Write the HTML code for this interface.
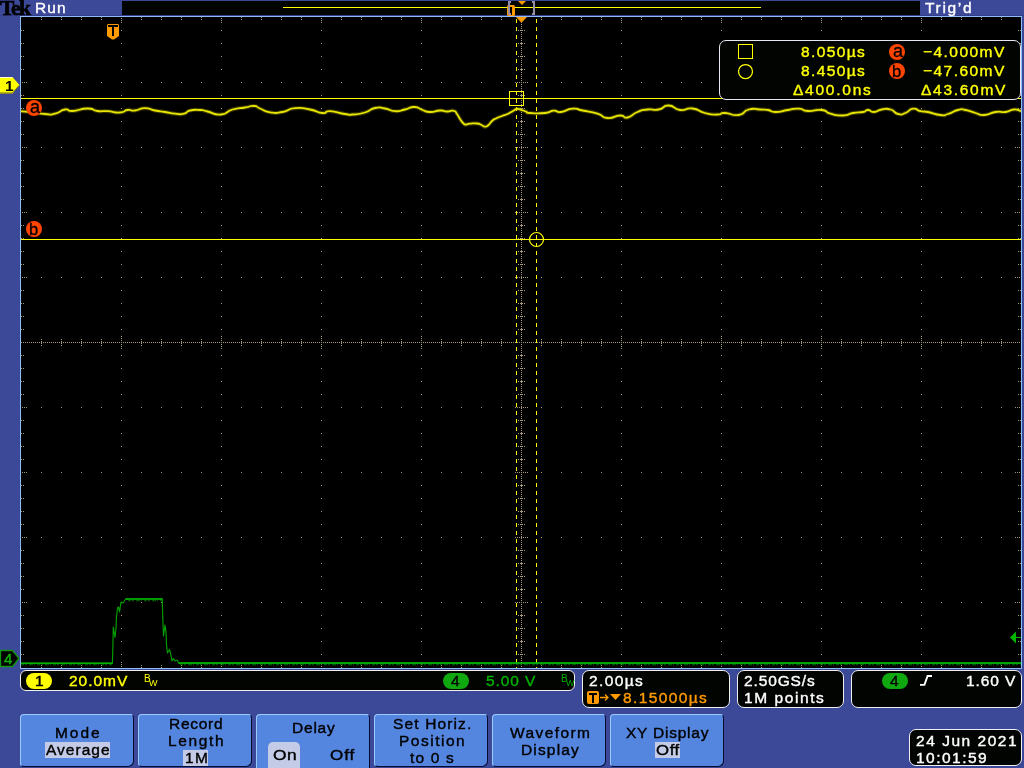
<!DOCTYPE html>
<html><head><meta charset="utf-8"><title>Tek</title>
<style>
html,body{margin:0;padding:0;}
html{width:1024px;height:768px;overflow:hidden;}
body{width:1024px;height:768px;overflow:hidden;background:#3c4898;position:relative;font-family:"Liberation Sans",sans-serif;}
.abs{position:absolute;}
.t{position:absolute;white-space:pre;}
.panel{position:absolute;box-sizing:border-box;background:#020402;border:1px solid #f0f0f0;border-radius:7px;}
.btn{position:absolute;box-sizing:border-box;background:#5486e0;border-radius:4px 4px 6px 4px;border-top:1px solid #9ccbff;border-left:1px solid #9ccbff;border-right:1px solid #040a30;border-bottom:1px solid #040a30;}
.hl{position:absolute;background:#c4cbe6;}
.pill{position:absolute;border-radius:8px;}
</style></head><body>
<!-- top bar -->
<div class="abs" style="left:122px;top:1px;width:798px;height:14px;background:#020402;"></div>
<div class="abs" style="left:283px;top:7px;width:478px;height:1px;background:#ffff00;"></div>
<!-- graticule frame -->
<div class="abs" style="left:0px;top:15px;width:1024px;height:1px;background:#323d8c;"></div>
<div class="abs" style="left:20px;top:16px;width:1002px;height:653px;background:#8fbcf5;"></div>
<div class="abs" style="left:21px;top:17px;width:1000px;height:651px;background:#000;"></div>
<svg class="abs" style="left:0;top:0" width="1024" height="768" viewBox="0 0 1024 768">
<g shape-rendering="crispEdges" stroke-width="1" fill="none">
<line x1="121.5" y1="336" x2="121.5" y2="349" stroke="#a89a78" stroke-dasharray="1 1" stroke-dashoffset="0"/>
<line x1="121.5" y1="30" x2="121.5" y2="666" stroke="#a89a78" stroke-dasharray="1 12" stroke-dashoffset="0"/>
<line x1="121.5" y1="18" x2="121.5" y2="23" stroke="#a89a78" stroke-dasharray="1 1" stroke-dashoffset="0"/>
<line x1="121.5" y1="662" x2="121.5" y2="667" stroke="#a89a78" stroke-dasharray="1 1" stroke-dashoffset="0"/>
<line x1="221.5" y1="336" x2="221.5" y2="349" stroke="#a89a78" stroke-dasharray="1 1" stroke-dashoffset="0"/>
<line x1="221.5" y1="30" x2="221.5" y2="666" stroke="#a89a78" stroke-dasharray="1 12" stroke-dashoffset="0"/>
<line x1="221.5" y1="18" x2="221.5" y2="23" stroke="#a89a78" stroke-dasharray="1 1" stroke-dashoffset="0"/>
<line x1="221.5" y1="662" x2="221.5" y2="667" stroke="#a89a78" stroke-dasharray="1 1" stroke-dashoffset="0"/>
<line x1="321.5" y1="336" x2="321.5" y2="349" stroke="#a89a78" stroke-dasharray="1 1" stroke-dashoffset="0"/>
<line x1="321.5" y1="30" x2="321.5" y2="666" stroke="#a89a78" stroke-dasharray="1 12" stroke-dashoffset="0"/>
<line x1="321.5" y1="18" x2="321.5" y2="23" stroke="#a89a78" stroke-dasharray="1 1" stroke-dashoffset="0"/>
<line x1="321.5" y1="662" x2="321.5" y2="667" stroke="#a89a78" stroke-dasharray="1 1" stroke-dashoffset="0"/>
<line x1="421.5" y1="336" x2="421.5" y2="349" stroke="#a89a78" stroke-dasharray="1 1" stroke-dashoffset="0"/>
<line x1="421.5" y1="30" x2="421.5" y2="666" stroke="#a89a78" stroke-dasharray="1 12" stroke-dashoffset="0"/>
<line x1="421.5" y1="18" x2="421.5" y2="23" stroke="#a89a78" stroke-dasharray="1 1" stroke-dashoffset="0"/>
<line x1="421.5" y1="662" x2="421.5" y2="667" stroke="#a89a78" stroke-dasharray="1 1" stroke-dashoffset="0"/>
<line x1="521.5" y1="18" x2="521.5" y2="668" stroke="#a89a78" stroke-dasharray="1 1" stroke-dashoffset="0"/>
<line x1="621.5" y1="336" x2="621.5" y2="349" stroke="#a89a78" stroke-dasharray="1 1" stroke-dashoffset="0"/>
<line x1="621.5" y1="30" x2="621.5" y2="666" stroke="#a89a78" stroke-dasharray="1 12" stroke-dashoffset="0"/>
<line x1="621.5" y1="18" x2="621.5" y2="23" stroke="#a89a78" stroke-dasharray="1 1" stroke-dashoffset="0"/>
<line x1="621.5" y1="662" x2="621.5" y2="667" stroke="#a89a78" stroke-dasharray="1 1" stroke-dashoffset="0"/>
<line x1="721.5" y1="336" x2="721.5" y2="349" stroke="#a89a78" stroke-dasharray="1 1" stroke-dashoffset="0"/>
<line x1="721.5" y1="30" x2="721.5" y2="666" stroke="#a89a78" stroke-dasharray="1 12" stroke-dashoffset="0"/>
<line x1="721.5" y1="18" x2="721.5" y2="23" stroke="#a89a78" stroke-dasharray="1 1" stroke-dashoffset="0"/>
<line x1="721.5" y1="662" x2="721.5" y2="667" stroke="#a89a78" stroke-dasharray="1 1" stroke-dashoffset="0"/>
<line x1="821.5" y1="336" x2="821.5" y2="349" stroke="#a89a78" stroke-dasharray="1 1" stroke-dashoffset="0"/>
<line x1="821.5" y1="30" x2="821.5" y2="666" stroke="#a89a78" stroke-dasharray="1 12" stroke-dashoffset="0"/>
<line x1="821.5" y1="18" x2="821.5" y2="23" stroke="#a89a78" stroke-dasharray="1 1" stroke-dashoffset="0"/>
<line x1="821.5" y1="662" x2="821.5" y2="667" stroke="#a89a78" stroke-dasharray="1 1" stroke-dashoffset="0"/>
<line x1="921.5" y1="336" x2="921.5" y2="349" stroke="#a89a78" stroke-dasharray="1 1" stroke-dashoffset="0"/>
<line x1="921.5" y1="30" x2="921.5" y2="666" stroke="#a89a78" stroke-dasharray="1 12" stroke-dashoffset="0"/>
<line x1="921.5" y1="18" x2="921.5" y2="23" stroke="#a89a78" stroke-dasharray="1 1" stroke-dashoffset="0"/>
<line x1="921.5" y1="662" x2="921.5" y2="667" stroke="#a89a78" stroke-dasharray="1 1" stroke-dashoffset="0"/>
<line x1="515" y1="82.5" x2="528" y2="82.5" stroke="#a89a78" stroke-dasharray="1 1" stroke-dashoffset="0"/>
<line x1="41" y1="82.5" x2="1019" y2="82.5" stroke="#a89a78" stroke-dasharray="1 19" stroke-dashoffset="0"/>
<line x1="22" y1="82.5" x2="27" y2="82.5" stroke="#a89a78" stroke-dasharray="1 1" stroke-dashoffset="0"/>
<line x1="1015" y1="82.5" x2="1020" y2="82.5" stroke="#a89a78" stroke-dasharray="1 1" stroke-dashoffset="0"/>
<line x1="515" y1="147.5" x2="528" y2="147.5" stroke="#a89a78" stroke-dasharray="1 1" stroke-dashoffset="0"/>
<line x1="41" y1="147.5" x2="1019" y2="147.5" stroke="#a89a78" stroke-dasharray="1 19" stroke-dashoffset="0"/>
<line x1="22" y1="147.5" x2="27" y2="147.5" stroke="#a89a78" stroke-dasharray="1 1" stroke-dashoffset="0"/>
<line x1="1015" y1="147.5" x2="1020" y2="147.5" stroke="#a89a78" stroke-dasharray="1 1" stroke-dashoffset="0"/>
<line x1="515" y1="212.5" x2="528" y2="212.5" stroke="#a89a78" stroke-dasharray="1 1" stroke-dashoffset="0"/>
<line x1="41" y1="212.5" x2="1019" y2="212.5" stroke="#a89a78" stroke-dasharray="1 19" stroke-dashoffset="0"/>
<line x1="22" y1="212.5" x2="27" y2="212.5" stroke="#a89a78" stroke-dasharray="1 1" stroke-dashoffset="0"/>
<line x1="1015" y1="212.5" x2="1020" y2="212.5" stroke="#a89a78" stroke-dasharray="1 1" stroke-dashoffset="0"/>
<line x1="515" y1="277.5" x2="528" y2="277.5" stroke="#a89a78" stroke-dasharray="1 1" stroke-dashoffset="0"/>
<line x1="41" y1="277.5" x2="1019" y2="277.5" stroke="#a89a78" stroke-dasharray="1 19" stroke-dashoffset="0"/>
<line x1="22" y1="277.5" x2="27" y2="277.5" stroke="#a89a78" stroke-dasharray="1 1" stroke-dashoffset="0"/>
<line x1="1015" y1="277.5" x2="1020" y2="277.5" stroke="#a89a78" stroke-dasharray="1 1" stroke-dashoffset="0"/>
<line x1="21" y1="342.5" x2="1021" y2="342.5" stroke="#a89a78" stroke-dasharray="1 1" stroke-dashoffset="0"/>
<line x1="515" y1="407.5" x2="528" y2="407.5" stroke="#a89a78" stroke-dasharray="1 1" stroke-dashoffset="0"/>
<line x1="41" y1="407.5" x2="1019" y2="407.5" stroke="#a89a78" stroke-dasharray="1 19" stroke-dashoffset="0"/>
<line x1="22" y1="407.5" x2="27" y2="407.5" stroke="#a89a78" stroke-dasharray="1 1" stroke-dashoffset="0"/>
<line x1="1015" y1="407.5" x2="1020" y2="407.5" stroke="#a89a78" stroke-dasharray="1 1" stroke-dashoffset="0"/>
<line x1="515" y1="472.5" x2="528" y2="472.5" stroke="#a89a78" stroke-dasharray="1 1" stroke-dashoffset="0"/>
<line x1="41" y1="472.5" x2="1019" y2="472.5" stroke="#a89a78" stroke-dasharray="1 19" stroke-dashoffset="0"/>
<line x1="22" y1="472.5" x2="27" y2="472.5" stroke="#a89a78" stroke-dasharray="1 1" stroke-dashoffset="0"/>
<line x1="1015" y1="472.5" x2="1020" y2="472.5" stroke="#a89a78" stroke-dasharray="1 1" stroke-dashoffset="0"/>
<line x1="515" y1="537.5" x2="528" y2="537.5" stroke="#a89a78" stroke-dasharray="1 1" stroke-dashoffset="0"/>
<line x1="41" y1="537.5" x2="1019" y2="537.5" stroke="#a89a78" stroke-dasharray="1 19" stroke-dashoffset="0"/>
<line x1="22" y1="537.5" x2="27" y2="537.5" stroke="#a89a78" stroke-dasharray="1 1" stroke-dashoffset="0"/>
<line x1="1015" y1="537.5" x2="1020" y2="537.5" stroke="#a89a78" stroke-dasharray="1 1" stroke-dashoffset="0"/>
<line x1="515" y1="602.5" x2="528" y2="602.5" stroke="#a89a78" stroke-dasharray="1 1" stroke-dashoffset="0"/>
<line x1="41" y1="602.5" x2="1019" y2="602.5" stroke="#a89a78" stroke-dasharray="1 19" stroke-dashoffset="0"/>
<line x1="22" y1="602.5" x2="27" y2="602.5" stroke="#a89a78" stroke-dasharray="1 1" stroke-dashoffset="0"/>
<line x1="1015" y1="602.5" x2="1020" y2="602.5" stroke="#a89a78" stroke-dasharray="1 1" stroke-dashoffset="0"/>
<line x1="41.5" y1="17" x2="41.5" y2="20" stroke="#a89a78" stroke-dasharray="1 1" stroke-dashoffset="0"/>
<line x1="41.5" y1="665" x2="41.5" y2="668" stroke="#a89a78" stroke-dasharray="1 1" stroke-dashoffset="0"/>
<rect x="41" y="341" width="1" height="3" fill="#a89a78"/>
<rect x="41" y="339" width="1" height="1" fill="#a89a78"/>
<rect x="41" y="345" width="1" height="1" fill="#a89a78"/>
<line x1="61.5" y1="17" x2="61.5" y2="20" stroke="#a89a78" stroke-dasharray="1 1" stroke-dashoffset="0"/>
<line x1="61.5" y1="665" x2="61.5" y2="668" stroke="#a89a78" stroke-dasharray="1 1" stroke-dashoffset="0"/>
<rect x="61" y="341" width="1" height="3" fill="#a89a78"/>
<rect x="61" y="339" width="1" height="1" fill="#a89a78"/>
<rect x="61" y="345" width="1" height="1" fill="#a89a78"/>
<line x1="81.5" y1="17" x2="81.5" y2="20" stroke="#a89a78" stroke-dasharray="1 1" stroke-dashoffset="0"/>
<line x1="81.5" y1="665" x2="81.5" y2="668" stroke="#a89a78" stroke-dasharray="1 1" stroke-dashoffset="0"/>
<rect x="81" y="341" width="1" height="3" fill="#a89a78"/>
<rect x="81" y="339" width="1" height="1" fill="#a89a78"/>
<rect x="81" y="345" width="1" height="1" fill="#a89a78"/>
<line x1="101.5" y1="17" x2="101.5" y2="20" stroke="#a89a78" stroke-dasharray="1 1" stroke-dashoffset="0"/>
<line x1="101.5" y1="665" x2="101.5" y2="668" stroke="#a89a78" stroke-dasharray="1 1" stroke-dashoffset="0"/>
<rect x="101" y="341" width="1" height="3" fill="#a89a78"/>
<rect x="101" y="339" width="1" height="1" fill="#a89a78"/>
<rect x="101" y="345" width="1" height="1" fill="#a89a78"/>
<line x1="141.5" y1="17" x2="141.5" y2="20" stroke="#a89a78" stroke-dasharray="1 1" stroke-dashoffset="0"/>
<line x1="141.5" y1="665" x2="141.5" y2="668" stroke="#a89a78" stroke-dasharray="1 1" stroke-dashoffset="0"/>
<rect x="141" y="341" width="1" height="3" fill="#a89a78"/>
<rect x="141" y="339" width="1" height="1" fill="#a89a78"/>
<rect x="141" y="345" width="1" height="1" fill="#a89a78"/>
<line x1="161.5" y1="17" x2="161.5" y2="20" stroke="#a89a78" stroke-dasharray="1 1" stroke-dashoffset="0"/>
<line x1="161.5" y1="665" x2="161.5" y2="668" stroke="#a89a78" stroke-dasharray="1 1" stroke-dashoffset="0"/>
<rect x="161" y="341" width="1" height="3" fill="#a89a78"/>
<rect x="161" y="339" width="1" height="1" fill="#a89a78"/>
<rect x="161" y="345" width="1" height="1" fill="#a89a78"/>
<line x1="181.5" y1="17" x2="181.5" y2="20" stroke="#a89a78" stroke-dasharray="1 1" stroke-dashoffset="0"/>
<line x1="181.5" y1="665" x2="181.5" y2="668" stroke="#a89a78" stroke-dasharray="1 1" stroke-dashoffset="0"/>
<rect x="181" y="341" width="1" height="3" fill="#a89a78"/>
<rect x="181" y="339" width="1" height="1" fill="#a89a78"/>
<rect x="181" y="345" width="1" height="1" fill="#a89a78"/>
<line x1="201.5" y1="17" x2="201.5" y2="20" stroke="#a89a78" stroke-dasharray="1 1" stroke-dashoffset="0"/>
<line x1="201.5" y1="665" x2="201.5" y2="668" stroke="#a89a78" stroke-dasharray="1 1" stroke-dashoffset="0"/>
<rect x="201" y="341" width="1" height="3" fill="#a89a78"/>
<rect x="201" y="339" width="1" height="1" fill="#a89a78"/>
<rect x="201" y="345" width="1" height="1" fill="#a89a78"/>
<line x1="241.5" y1="17" x2="241.5" y2="20" stroke="#a89a78" stroke-dasharray="1 1" stroke-dashoffset="0"/>
<line x1="241.5" y1="665" x2="241.5" y2="668" stroke="#a89a78" stroke-dasharray="1 1" stroke-dashoffset="0"/>
<rect x="241" y="341" width="1" height="3" fill="#a89a78"/>
<rect x="241" y="339" width="1" height="1" fill="#a89a78"/>
<rect x="241" y="345" width="1" height="1" fill="#a89a78"/>
<line x1="261.5" y1="17" x2="261.5" y2="20" stroke="#a89a78" stroke-dasharray="1 1" stroke-dashoffset="0"/>
<line x1="261.5" y1="665" x2="261.5" y2="668" stroke="#a89a78" stroke-dasharray="1 1" stroke-dashoffset="0"/>
<rect x="261" y="341" width="1" height="3" fill="#a89a78"/>
<rect x="261" y="339" width="1" height="1" fill="#a89a78"/>
<rect x="261" y="345" width="1" height="1" fill="#a89a78"/>
<line x1="281.5" y1="17" x2="281.5" y2="20" stroke="#a89a78" stroke-dasharray="1 1" stroke-dashoffset="0"/>
<line x1="281.5" y1="665" x2="281.5" y2="668" stroke="#a89a78" stroke-dasharray="1 1" stroke-dashoffset="0"/>
<rect x="281" y="341" width="1" height="3" fill="#a89a78"/>
<rect x="281" y="339" width="1" height="1" fill="#a89a78"/>
<rect x="281" y="345" width="1" height="1" fill="#a89a78"/>
<line x1="301.5" y1="17" x2="301.5" y2="20" stroke="#a89a78" stroke-dasharray="1 1" stroke-dashoffset="0"/>
<line x1="301.5" y1="665" x2="301.5" y2="668" stroke="#a89a78" stroke-dasharray="1 1" stroke-dashoffset="0"/>
<rect x="301" y="341" width="1" height="3" fill="#a89a78"/>
<rect x="301" y="339" width="1" height="1" fill="#a89a78"/>
<rect x="301" y="345" width="1" height="1" fill="#a89a78"/>
<line x1="341.5" y1="17" x2="341.5" y2="20" stroke="#a89a78" stroke-dasharray="1 1" stroke-dashoffset="0"/>
<line x1="341.5" y1="665" x2="341.5" y2="668" stroke="#a89a78" stroke-dasharray="1 1" stroke-dashoffset="0"/>
<rect x="341" y="341" width="1" height="3" fill="#a89a78"/>
<rect x="341" y="339" width="1" height="1" fill="#a89a78"/>
<rect x="341" y="345" width="1" height="1" fill="#a89a78"/>
<line x1="361.5" y1="17" x2="361.5" y2="20" stroke="#a89a78" stroke-dasharray="1 1" stroke-dashoffset="0"/>
<line x1="361.5" y1="665" x2="361.5" y2="668" stroke="#a89a78" stroke-dasharray="1 1" stroke-dashoffset="0"/>
<rect x="361" y="341" width="1" height="3" fill="#a89a78"/>
<rect x="361" y="339" width="1" height="1" fill="#a89a78"/>
<rect x="361" y="345" width="1" height="1" fill="#a89a78"/>
<line x1="381.5" y1="17" x2="381.5" y2="20" stroke="#a89a78" stroke-dasharray="1 1" stroke-dashoffset="0"/>
<line x1="381.5" y1="665" x2="381.5" y2="668" stroke="#a89a78" stroke-dasharray="1 1" stroke-dashoffset="0"/>
<rect x="381" y="341" width="1" height="3" fill="#a89a78"/>
<rect x="381" y="339" width="1" height="1" fill="#a89a78"/>
<rect x="381" y="345" width="1" height="1" fill="#a89a78"/>
<line x1="401.5" y1="17" x2="401.5" y2="20" stroke="#a89a78" stroke-dasharray="1 1" stroke-dashoffset="0"/>
<line x1="401.5" y1="665" x2="401.5" y2="668" stroke="#a89a78" stroke-dasharray="1 1" stroke-dashoffset="0"/>
<rect x="401" y="341" width="1" height="3" fill="#a89a78"/>
<rect x="401" y="339" width="1" height="1" fill="#a89a78"/>
<rect x="401" y="345" width="1" height="1" fill="#a89a78"/>
<line x1="441.5" y1="17" x2="441.5" y2="20" stroke="#a89a78" stroke-dasharray="1 1" stroke-dashoffset="0"/>
<line x1="441.5" y1="665" x2="441.5" y2="668" stroke="#a89a78" stroke-dasharray="1 1" stroke-dashoffset="0"/>
<rect x="441" y="341" width="1" height="3" fill="#a89a78"/>
<rect x="441" y="339" width="1" height="1" fill="#a89a78"/>
<rect x="441" y="345" width="1" height="1" fill="#a89a78"/>
<line x1="461.5" y1="17" x2="461.5" y2="20" stroke="#a89a78" stroke-dasharray="1 1" stroke-dashoffset="0"/>
<line x1="461.5" y1="665" x2="461.5" y2="668" stroke="#a89a78" stroke-dasharray="1 1" stroke-dashoffset="0"/>
<rect x="461" y="341" width="1" height="3" fill="#a89a78"/>
<rect x="461" y="339" width="1" height="1" fill="#a89a78"/>
<rect x="461" y="345" width="1" height="1" fill="#a89a78"/>
<line x1="481.5" y1="17" x2="481.5" y2="20" stroke="#a89a78" stroke-dasharray="1 1" stroke-dashoffset="0"/>
<line x1="481.5" y1="665" x2="481.5" y2="668" stroke="#a89a78" stroke-dasharray="1 1" stroke-dashoffset="0"/>
<rect x="481" y="341" width="1" height="3" fill="#a89a78"/>
<rect x="481" y="339" width="1" height="1" fill="#a89a78"/>
<rect x="481" y="345" width="1" height="1" fill="#a89a78"/>
<line x1="501.5" y1="17" x2="501.5" y2="20" stroke="#a89a78" stroke-dasharray="1 1" stroke-dashoffset="0"/>
<line x1="501.5" y1="665" x2="501.5" y2="668" stroke="#a89a78" stroke-dasharray="1 1" stroke-dashoffset="0"/>
<rect x="501" y="341" width="1" height="3" fill="#a89a78"/>
<rect x="501" y="339" width="1" height="1" fill="#a89a78"/>
<rect x="501" y="345" width="1" height="1" fill="#a89a78"/>
<line x1="541.5" y1="17" x2="541.5" y2="20" stroke="#a89a78" stroke-dasharray="1 1" stroke-dashoffset="0"/>
<line x1="541.5" y1="665" x2="541.5" y2="668" stroke="#a89a78" stroke-dasharray="1 1" stroke-dashoffset="0"/>
<rect x="541" y="341" width="1" height="3" fill="#a89a78"/>
<rect x="541" y="339" width="1" height="1" fill="#a89a78"/>
<rect x="541" y="345" width="1" height="1" fill="#a89a78"/>
<line x1="561.5" y1="17" x2="561.5" y2="20" stroke="#a89a78" stroke-dasharray="1 1" stroke-dashoffset="0"/>
<line x1="561.5" y1="665" x2="561.5" y2="668" stroke="#a89a78" stroke-dasharray="1 1" stroke-dashoffset="0"/>
<rect x="561" y="341" width="1" height="3" fill="#a89a78"/>
<rect x="561" y="339" width="1" height="1" fill="#a89a78"/>
<rect x="561" y="345" width="1" height="1" fill="#a89a78"/>
<line x1="581.5" y1="17" x2="581.5" y2="20" stroke="#a89a78" stroke-dasharray="1 1" stroke-dashoffset="0"/>
<line x1="581.5" y1="665" x2="581.5" y2="668" stroke="#a89a78" stroke-dasharray="1 1" stroke-dashoffset="0"/>
<rect x="581" y="341" width="1" height="3" fill="#a89a78"/>
<rect x="581" y="339" width="1" height="1" fill="#a89a78"/>
<rect x="581" y="345" width="1" height="1" fill="#a89a78"/>
<line x1="601.5" y1="17" x2="601.5" y2="20" stroke="#a89a78" stroke-dasharray="1 1" stroke-dashoffset="0"/>
<line x1="601.5" y1="665" x2="601.5" y2="668" stroke="#a89a78" stroke-dasharray="1 1" stroke-dashoffset="0"/>
<rect x="601" y="341" width="1" height="3" fill="#a89a78"/>
<rect x="601" y="339" width="1" height="1" fill="#a89a78"/>
<rect x="601" y="345" width="1" height="1" fill="#a89a78"/>
<line x1="641.5" y1="17" x2="641.5" y2="20" stroke="#a89a78" stroke-dasharray="1 1" stroke-dashoffset="0"/>
<line x1="641.5" y1="665" x2="641.5" y2="668" stroke="#a89a78" stroke-dasharray="1 1" stroke-dashoffset="0"/>
<rect x="641" y="341" width="1" height="3" fill="#a89a78"/>
<rect x="641" y="339" width="1" height="1" fill="#a89a78"/>
<rect x="641" y="345" width="1" height="1" fill="#a89a78"/>
<line x1="661.5" y1="17" x2="661.5" y2="20" stroke="#a89a78" stroke-dasharray="1 1" stroke-dashoffset="0"/>
<line x1="661.5" y1="665" x2="661.5" y2="668" stroke="#a89a78" stroke-dasharray="1 1" stroke-dashoffset="0"/>
<rect x="661" y="341" width="1" height="3" fill="#a89a78"/>
<rect x="661" y="339" width="1" height="1" fill="#a89a78"/>
<rect x="661" y="345" width="1" height="1" fill="#a89a78"/>
<line x1="681.5" y1="17" x2="681.5" y2="20" stroke="#a89a78" stroke-dasharray="1 1" stroke-dashoffset="0"/>
<line x1="681.5" y1="665" x2="681.5" y2="668" stroke="#a89a78" stroke-dasharray="1 1" stroke-dashoffset="0"/>
<rect x="681" y="341" width="1" height="3" fill="#a89a78"/>
<rect x="681" y="339" width="1" height="1" fill="#a89a78"/>
<rect x="681" y="345" width="1" height="1" fill="#a89a78"/>
<line x1="701.5" y1="17" x2="701.5" y2="20" stroke="#a89a78" stroke-dasharray="1 1" stroke-dashoffset="0"/>
<line x1="701.5" y1="665" x2="701.5" y2="668" stroke="#a89a78" stroke-dasharray="1 1" stroke-dashoffset="0"/>
<rect x="701" y="341" width="1" height="3" fill="#a89a78"/>
<rect x="701" y="339" width="1" height="1" fill="#a89a78"/>
<rect x="701" y="345" width="1" height="1" fill="#a89a78"/>
<line x1="741.5" y1="17" x2="741.5" y2="20" stroke="#a89a78" stroke-dasharray="1 1" stroke-dashoffset="0"/>
<line x1="741.5" y1="665" x2="741.5" y2="668" stroke="#a89a78" stroke-dasharray="1 1" stroke-dashoffset="0"/>
<rect x="741" y="341" width="1" height="3" fill="#a89a78"/>
<rect x="741" y="339" width="1" height="1" fill="#a89a78"/>
<rect x="741" y="345" width="1" height="1" fill="#a89a78"/>
<line x1="761.5" y1="17" x2="761.5" y2="20" stroke="#a89a78" stroke-dasharray="1 1" stroke-dashoffset="0"/>
<line x1="761.5" y1="665" x2="761.5" y2="668" stroke="#a89a78" stroke-dasharray="1 1" stroke-dashoffset="0"/>
<rect x="761" y="341" width="1" height="3" fill="#a89a78"/>
<rect x="761" y="339" width="1" height="1" fill="#a89a78"/>
<rect x="761" y="345" width="1" height="1" fill="#a89a78"/>
<line x1="781.5" y1="17" x2="781.5" y2="20" stroke="#a89a78" stroke-dasharray="1 1" stroke-dashoffset="0"/>
<line x1="781.5" y1="665" x2="781.5" y2="668" stroke="#a89a78" stroke-dasharray="1 1" stroke-dashoffset="0"/>
<rect x="781" y="341" width="1" height="3" fill="#a89a78"/>
<rect x="781" y="339" width="1" height="1" fill="#a89a78"/>
<rect x="781" y="345" width="1" height="1" fill="#a89a78"/>
<line x1="801.5" y1="17" x2="801.5" y2="20" stroke="#a89a78" stroke-dasharray="1 1" stroke-dashoffset="0"/>
<line x1="801.5" y1="665" x2="801.5" y2="668" stroke="#a89a78" stroke-dasharray="1 1" stroke-dashoffset="0"/>
<rect x="801" y="341" width="1" height="3" fill="#a89a78"/>
<rect x="801" y="339" width="1" height="1" fill="#a89a78"/>
<rect x="801" y="345" width="1" height="1" fill="#a89a78"/>
<line x1="841.5" y1="17" x2="841.5" y2="20" stroke="#a89a78" stroke-dasharray="1 1" stroke-dashoffset="0"/>
<line x1="841.5" y1="665" x2="841.5" y2="668" stroke="#a89a78" stroke-dasharray="1 1" stroke-dashoffset="0"/>
<rect x="841" y="341" width="1" height="3" fill="#a89a78"/>
<rect x="841" y="339" width="1" height="1" fill="#a89a78"/>
<rect x="841" y="345" width="1" height="1" fill="#a89a78"/>
<line x1="861.5" y1="17" x2="861.5" y2="20" stroke="#a89a78" stroke-dasharray="1 1" stroke-dashoffset="0"/>
<line x1="861.5" y1="665" x2="861.5" y2="668" stroke="#a89a78" stroke-dasharray="1 1" stroke-dashoffset="0"/>
<rect x="861" y="341" width="1" height="3" fill="#a89a78"/>
<rect x="861" y="339" width="1" height="1" fill="#a89a78"/>
<rect x="861" y="345" width="1" height="1" fill="#a89a78"/>
<line x1="881.5" y1="17" x2="881.5" y2="20" stroke="#a89a78" stroke-dasharray="1 1" stroke-dashoffset="0"/>
<line x1="881.5" y1="665" x2="881.5" y2="668" stroke="#a89a78" stroke-dasharray="1 1" stroke-dashoffset="0"/>
<rect x="881" y="341" width="1" height="3" fill="#a89a78"/>
<rect x="881" y="339" width="1" height="1" fill="#a89a78"/>
<rect x="881" y="345" width="1" height="1" fill="#a89a78"/>
<line x1="901.5" y1="17" x2="901.5" y2="20" stroke="#a89a78" stroke-dasharray="1 1" stroke-dashoffset="0"/>
<line x1="901.5" y1="665" x2="901.5" y2="668" stroke="#a89a78" stroke-dasharray="1 1" stroke-dashoffset="0"/>
<rect x="901" y="341" width="1" height="3" fill="#a89a78"/>
<rect x="901" y="339" width="1" height="1" fill="#a89a78"/>
<rect x="901" y="345" width="1" height="1" fill="#a89a78"/>
<line x1="941.5" y1="17" x2="941.5" y2="20" stroke="#a89a78" stroke-dasharray="1 1" stroke-dashoffset="0"/>
<line x1="941.5" y1="665" x2="941.5" y2="668" stroke="#a89a78" stroke-dasharray="1 1" stroke-dashoffset="0"/>
<rect x="941" y="341" width="1" height="3" fill="#a89a78"/>
<rect x="941" y="339" width="1" height="1" fill="#a89a78"/>
<rect x="941" y="345" width="1" height="1" fill="#a89a78"/>
<line x1="961.5" y1="17" x2="961.5" y2="20" stroke="#a89a78" stroke-dasharray="1 1" stroke-dashoffset="0"/>
<line x1="961.5" y1="665" x2="961.5" y2="668" stroke="#a89a78" stroke-dasharray="1 1" stroke-dashoffset="0"/>
<rect x="961" y="341" width="1" height="3" fill="#a89a78"/>
<rect x="961" y="339" width="1" height="1" fill="#a89a78"/>
<rect x="961" y="345" width="1" height="1" fill="#a89a78"/>
<line x1="981.5" y1="17" x2="981.5" y2="20" stroke="#a89a78" stroke-dasharray="1 1" stroke-dashoffset="0"/>
<line x1="981.5" y1="665" x2="981.5" y2="668" stroke="#a89a78" stroke-dasharray="1 1" stroke-dashoffset="0"/>
<rect x="981" y="341" width="1" height="3" fill="#a89a78"/>
<rect x="981" y="339" width="1" height="1" fill="#a89a78"/>
<rect x="981" y="345" width="1" height="1" fill="#a89a78"/>
<line x1="1001.5" y1="17" x2="1001.5" y2="20" stroke="#a89a78" stroke-dasharray="1 1" stroke-dashoffset="0"/>
<line x1="1001.5" y1="665" x2="1001.5" y2="668" stroke="#a89a78" stroke-dasharray="1 1" stroke-dashoffset="0"/>
<rect x="1001" y="341" width="1" height="3" fill="#a89a78"/>
<rect x="1001" y="339" width="1" height="1" fill="#a89a78"/>
<rect x="1001" y="345" width="1" height="1" fill="#a89a78"/>
<line x1="21" y1="30.5" x2="24" y2="30.5" stroke="#a89a78" stroke-dasharray="1 1" stroke-dashoffset="0"/>
<line x1="1018" y1="30.5" x2="1021" y2="30.5" stroke="#a89a78" stroke-dasharray="1 1" stroke-dashoffset="0"/>
<rect x="520" y="30" width="3" height="1" fill="#a89a78"/>
<rect x="518" y="30" width="1" height="1" fill="#a89a78"/>
<rect x="524" y="30" width="1" height="1" fill="#a89a78"/>
<line x1="21" y1="43.5" x2="24" y2="43.5" stroke="#a89a78" stroke-dasharray="1 1" stroke-dashoffset="0"/>
<line x1="1018" y1="43.5" x2="1021" y2="43.5" stroke="#a89a78" stroke-dasharray="1 1" stroke-dashoffset="0"/>
<rect x="520" y="43" width="3" height="1" fill="#a89a78"/>
<rect x="518" y="43" width="1" height="1" fill="#a89a78"/>
<rect x="524" y="43" width="1" height="1" fill="#a89a78"/>
<line x1="21" y1="56.5" x2="24" y2="56.5" stroke="#a89a78" stroke-dasharray="1 1" stroke-dashoffset="0"/>
<line x1="1018" y1="56.5" x2="1021" y2="56.5" stroke="#a89a78" stroke-dasharray="1 1" stroke-dashoffset="0"/>
<rect x="520" y="56" width="3" height="1" fill="#a89a78"/>
<rect x="518" y="56" width="1" height="1" fill="#a89a78"/>
<rect x="524" y="56" width="1" height="1" fill="#a89a78"/>
<line x1="21" y1="69.5" x2="24" y2="69.5" stroke="#a89a78" stroke-dasharray="1 1" stroke-dashoffset="0"/>
<line x1="1018" y1="69.5" x2="1021" y2="69.5" stroke="#a89a78" stroke-dasharray="1 1" stroke-dashoffset="0"/>
<rect x="520" y="69" width="3" height="1" fill="#a89a78"/>
<rect x="518" y="69" width="1" height="1" fill="#a89a78"/>
<rect x="524" y="69" width="1" height="1" fill="#a89a78"/>
<line x1="21" y1="95.5" x2="24" y2="95.5" stroke="#a89a78" stroke-dasharray="1 1" stroke-dashoffset="0"/>
<line x1="1018" y1="95.5" x2="1021" y2="95.5" stroke="#a89a78" stroke-dasharray="1 1" stroke-dashoffset="0"/>
<rect x="520" y="95" width="3" height="1" fill="#a89a78"/>
<rect x="518" y="95" width="1" height="1" fill="#a89a78"/>
<rect x="524" y="95" width="1" height="1" fill="#a89a78"/>
<line x1="21" y1="108.5" x2="24" y2="108.5" stroke="#a89a78" stroke-dasharray="1 1" stroke-dashoffset="0"/>
<line x1="1018" y1="108.5" x2="1021" y2="108.5" stroke="#a89a78" stroke-dasharray="1 1" stroke-dashoffset="0"/>
<rect x="520" y="108" width="3" height="1" fill="#a89a78"/>
<rect x="518" y="108" width="1" height="1" fill="#a89a78"/>
<rect x="524" y="108" width="1" height="1" fill="#a89a78"/>
<line x1="21" y1="121.5" x2="24" y2="121.5" stroke="#a89a78" stroke-dasharray="1 1" stroke-dashoffset="0"/>
<line x1="1018" y1="121.5" x2="1021" y2="121.5" stroke="#a89a78" stroke-dasharray="1 1" stroke-dashoffset="0"/>
<rect x="520" y="121" width="3" height="1" fill="#a89a78"/>
<rect x="518" y="121" width="1" height="1" fill="#a89a78"/>
<rect x="524" y="121" width="1" height="1" fill="#a89a78"/>
<line x1="21" y1="134.5" x2="24" y2="134.5" stroke="#a89a78" stroke-dasharray="1 1" stroke-dashoffset="0"/>
<line x1="1018" y1="134.5" x2="1021" y2="134.5" stroke="#a89a78" stroke-dasharray="1 1" stroke-dashoffset="0"/>
<rect x="520" y="134" width="3" height="1" fill="#a89a78"/>
<rect x="518" y="134" width="1" height="1" fill="#a89a78"/>
<rect x="524" y="134" width="1" height="1" fill="#a89a78"/>
<line x1="21" y1="160.5" x2="24" y2="160.5" stroke="#a89a78" stroke-dasharray="1 1" stroke-dashoffset="0"/>
<line x1="1018" y1="160.5" x2="1021" y2="160.5" stroke="#a89a78" stroke-dasharray="1 1" stroke-dashoffset="0"/>
<rect x="520" y="160" width="3" height="1" fill="#a89a78"/>
<rect x="518" y="160" width="1" height="1" fill="#a89a78"/>
<rect x="524" y="160" width="1" height="1" fill="#a89a78"/>
<line x1="21" y1="173.5" x2="24" y2="173.5" stroke="#a89a78" stroke-dasharray="1 1" stroke-dashoffset="0"/>
<line x1="1018" y1="173.5" x2="1021" y2="173.5" stroke="#a89a78" stroke-dasharray="1 1" stroke-dashoffset="0"/>
<rect x="520" y="173" width="3" height="1" fill="#a89a78"/>
<rect x="518" y="173" width="1" height="1" fill="#a89a78"/>
<rect x="524" y="173" width="1" height="1" fill="#a89a78"/>
<line x1="21" y1="186.5" x2="24" y2="186.5" stroke="#a89a78" stroke-dasharray="1 1" stroke-dashoffset="0"/>
<line x1="1018" y1="186.5" x2="1021" y2="186.5" stroke="#a89a78" stroke-dasharray="1 1" stroke-dashoffset="0"/>
<rect x="520" y="186" width="3" height="1" fill="#a89a78"/>
<rect x="518" y="186" width="1" height="1" fill="#a89a78"/>
<rect x="524" y="186" width="1" height="1" fill="#a89a78"/>
<line x1="21" y1="199.5" x2="24" y2="199.5" stroke="#a89a78" stroke-dasharray="1 1" stroke-dashoffset="0"/>
<line x1="1018" y1="199.5" x2="1021" y2="199.5" stroke="#a89a78" stroke-dasharray="1 1" stroke-dashoffset="0"/>
<rect x="520" y="199" width="3" height="1" fill="#a89a78"/>
<rect x="518" y="199" width="1" height="1" fill="#a89a78"/>
<rect x="524" y="199" width="1" height="1" fill="#a89a78"/>
<line x1="21" y1="225.5" x2="24" y2="225.5" stroke="#a89a78" stroke-dasharray="1 1" stroke-dashoffset="0"/>
<line x1="1018" y1="225.5" x2="1021" y2="225.5" stroke="#a89a78" stroke-dasharray="1 1" stroke-dashoffset="0"/>
<rect x="520" y="225" width="3" height="1" fill="#a89a78"/>
<rect x="518" y="225" width="1" height="1" fill="#a89a78"/>
<rect x="524" y="225" width="1" height="1" fill="#a89a78"/>
<line x1="21" y1="238.5" x2="24" y2="238.5" stroke="#a89a78" stroke-dasharray="1 1" stroke-dashoffset="0"/>
<line x1="1018" y1="238.5" x2="1021" y2="238.5" stroke="#a89a78" stroke-dasharray="1 1" stroke-dashoffset="0"/>
<rect x="520" y="238" width="3" height="1" fill="#a89a78"/>
<rect x="518" y="238" width="1" height="1" fill="#a89a78"/>
<rect x="524" y="238" width="1" height="1" fill="#a89a78"/>
<line x1="21" y1="251.5" x2="24" y2="251.5" stroke="#a89a78" stroke-dasharray="1 1" stroke-dashoffset="0"/>
<line x1="1018" y1="251.5" x2="1021" y2="251.5" stroke="#a89a78" stroke-dasharray="1 1" stroke-dashoffset="0"/>
<rect x="520" y="251" width="3" height="1" fill="#a89a78"/>
<rect x="518" y="251" width="1" height="1" fill="#a89a78"/>
<rect x="524" y="251" width="1" height="1" fill="#a89a78"/>
<line x1="21" y1="264.5" x2="24" y2="264.5" stroke="#a89a78" stroke-dasharray="1 1" stroke-dashoffset="0"/>
<line x1="1018" y1="264.5" x2="1021" y2="264.5" stroke="#a89a78" stroke-dasharray="1 1" stroke-dashoffset="0"/>
<rect x="520" y="264" width="3" height="1" fill="#a89a78"/>
<rect x="518" y="264" width="1" height="1" fill="#a89a78"/>
<rect x="524" y="264" width="1" height="1" fill="#a89a78"/>
<line x1="21" y1="290.5" x2="24" y2="290.5" stroke="#a89a78" stroke-dasharray="1 1" stroke-dashoffset="0"/>
<line x1="1018" y1="290.5" x2="1021" y2="290.5" stroke="#a89a78" stroke-dasharray="1 1" stroke-dashoffset="0"/>
<rect x="520" y="290" width="3" height="1" fill="#a89a78"/>
<rect x="518" y="290" width="1" height="1" fill="#a89a78"/>
<rect x="524" y="290" width="1" height="1" fill="#a89a78"/>
<line x1="21" y1="303.5" x2="24" y2="303.5" stroke="#a89a78" stroke-dasharray="1 1" stroke-dashoffset="0"/>
<line x1="1018" y1="303.5" x2="1021" y2="303.5" stroke="#a89a78" stroke-dasharray="1 1" stroke-dashoffset="0"/>
<rect x="520" y="303" width="3" height="1" fill="#a89a78"/>
<rect x="518" y="303" width="1" height="1" fill="#a89a78"/>
<rect x="524" y="303" width="1" height="1" fill="#a89a78"/>
<line x1="21" y1="316.5" x2="24" y2="316.5" stroke="#a89a78" stroke-dasharray="1 1" stroke-dashoffset="0"/>
<line x1="1018" y1="316.5" x2="1021" y2="316.5" stroke="#a89a78" stroke-dasharray="1 1" stroke-dashoffset="0"/>
<rect x="520" y="316" width="3" height="1" fill="#a89a78"/>
<rect x="518" y="316" width="1" height="1" fill="#a89a78"/>
<rect x="524" y="316" width="1" height="1" fill="#a89a78"/>
<line x1="21" y1="329.5" x2="24" y2="329.5" stroke="#a89a78" stroke-dasharray="1 1" stroke-dashoffset="0"/>
<line x1="1018" y1="329.5" x2="1021" y2="329.5" stroke="#a89a78" stroke-dasharray="1 1" stroke-dashoffset="0"/>
<rect x="520" y="329" width="3" height="1" fill="#a89a78"/>
<rect x="518" y="329" width="1" height="1" fill="#a89a78"/>
<rect x="524" y="329" width="1" height="1" fill="#a89a78"/>
<line x1="21" y1="355.5" x2="24" y2="355.5" stroke="#a89a78" stroke-dasharray="1 1" stroke-dashoffset="0"/>
<line x1="1018" y1="355.5" x2="1021" y2="355.5" stroke="#a89a78" stroke-dasharray="1 1" stroke-dashoffset="0"/>
<rect x="520" y="355" width="3" height="1" fill="#a89a78"/>
<rect x="518" y="355" width="1" height="1" fill="#a89a78"/>
<rect x="524" y="355" width="1" height="1" fill="#a89a78"/>
<line x1="21" y1="368.5" x2="24" y2="368.5" stroke="#a89a78" stroke-dasharray="1 1" stroke-dashoffset="0"/>
<line x1="1018" y1="368.5" x2="1021" y2="368.5" stroke="#a89a78" stroke-dasharray="1 1" stroke-dashoffset="0"/>
<rect x="520" y="368" width="3" height="1" fill="#a89a78"/>
<rect x="518" y="368" width="1" height="1" fill="#a89a78"/>
<rect x="524" y="368" width="1" height="1" fill="#a89a78"/>
<line x1="21" y1="381.5" x2="24" y2="381.5" stroke="#a89a78" stroke-dasharray="1 1" stroke-dashoffset="0"/>
<line x1="1018" y1="381.5" x2="1021" y2="381.5" stroke="#a89a78" stroke-dasharray="1 1" stroke-dashoffset="0"/>
<rect x="520" y="381" width="3" height="1" fill="#a89a78"/>
<rect x="518" y="381" width="1" height="1" fill="#a89a78"/>
<rect x="524" y="381" width="1" height="1" fill="#a89a78"/>
<line x1="21" y1="394.5" x2="24" y2="394.5" stroke="#a89a78" stroke-dasharray="1 1" stroke-dashoffset="0"/>
<line x1="1018" y1="394.5" x2="1021" y2="394.5" stroke="#a89a78" stroke-dasharray="1 1" stroke-dashoffset="0"/>
<rect x="520" y="394" width="3" height="1" fill="#a89a78"/>
<rect x="518" y="394" width="1" height="1" fill="#a89a78"/>
<rect x="524" y="394" width="1" height="1" fill="#a89a78"/>
<line x1="21" y1="420.5" x2="24" y2="420.5" stroke="#a89a78" stroke-dasharray="1 1" stroke-dashoffset="0"/>
<line x1="1018" y1="420.5" x2="1021" y2="420.5" stroke="#a89a78" stroke-dasharray="1 1" stroke-dashoffset="0"/>
<rect x="520" y="420" width="3" height="1" fill="#a89a78"/>
<rect x="518" y="420" width="1" height="1" fill="#a89a78"/>
<rect x="524" y="420" width="1" height="1" fill="#a89a78"/>
<line x1="21" y1="433.5" x2="24" y2="433.5" stroke="#a89a78" stroke-dasharray="1 1" stroke-dashoffset="0"/>
<line x1="1018" y1="433.5" x2="1021" y2="433.5" stroke="#a89a78" stroke-dasharray="1 1" stroke-dashoffset="0"/>
<rect x="520" y="433" width="3" height="1" fill="#a89a78"/>
<rect x="518" y="433" width="1" height="1" fill="#a89a78"/>
<rect x="524" y="433" width="1" height="1" fill="#a89a78"/>
<line x1="21" y1="446.5" x2="24" y2="446.5" stroke="#a89a78" stroke-dasharray="1 1" stroke-dashoffset="0"/>
<line x1="1018" y1="446.5" x2="1021" y2="446.5" stroke="#a89a78" stroke-dasharray="1 1" stroke-dashoffset="0"/>
<rect x="520" y="446" width="3" height="1" fill="#a89a78"/>
<rect x="518" y="446" width="1" height="1" fill="#a89a78"/>
<rect x="524" y="446" width="1" height="1" fill="#a89a78"/>
<line x1="21" y1="459.5" x2="24" y2="459.5" stroke="#a89a78" stroke-dasharray="1 1" stroke-dashoffset="0"/>
<line x1="1018" y1="459.5" x2="1021" y2="459.5" stroke="#a89a78" stroke-dasharray="1 1" stroke-dashoffset="0"/>
<rect x="520" y="459" width="3" height="1" fill="#a89a78"/>
<rect x="518" y="459" width="1" height="1" fill="#a89a78"/>
<rect x="524" y="459" width="1" height="1" fill="#a89a78"/>
<line x1="21" y1="485.5" x2="24" y2="485.5" stroke="#a89a78" stroke-dasharray="1 1" stroke-dashoffset="0"/>
<line x1="1018" y1="485.5" x2="1021" y2="485.5" stroke="#a89a78" stroke-dasharray="1 1" stroke-dashoffset="0"/>
<rect x="520" y="485" width="3" height="1" fill="#a89a78"/>
<rect x="518" y="485" width="1" height="1" fill="#a89a78"/>
<rect x="524" y="485" width="1" height="1" fill="#a89a78"/>
<line x1="21" y1="498.5" x2="24" y2="498.5" stroke="#a89a78" stroke-dasharray="1 1" stroke-dashoffset="0"/>
<line x1="1018" y1="498.5" x2="1021" y2="498.5" stroke="#a89a78" stroke-dasharray="1 1" stroke-dashoffset="0"/>
<rect x="520" y="498" width="3" height="1" fill="#a89a78"/>
<rect x="518" y="498" width="1" height="1" fill="#a89a78"/>
<rect x="524" y="498" width="1" height="1" fill="#a89a78"/>
<line x1="21" y1="511.5" x2="24" y2="511.5" stroke="#a89a78" stroke-dasharray="1 1" stroke-dashoffset="0"/>
<line x1="1018" y1="511.5" x2="1021" y2="511.5" stroke="#a89a78" stroke-dasharray="1 1" stroke-dashoffset="0"/>
<rect x="520" y="511" width="3" height="1" fill="#a89a78"/>
<rect x="518" y="511" width="1" height="1" fill="#a89a78"/>
<rect x="524" y="511" width="1" height="1" fill="#a89a78"/>
<line x1="21" y1="524.5" x2="24" y2="524.5" stroke="#a89a78" stroke-dasharray="1 1" stroke-dashoffset="0"/>
<line x1="1018" y1="524.5" x2="1021" y2="524.5" stroke="#a89a78" stroke-dasharray="1 1" stroke-dashoffset="0"/>
<rect x="520" y="524" width="3" height="1" fill="#a89a78"/>
<rect x="518" y="524" width="1" height="1" fill="#a89a78"/>
<rect x="524" y="524" width="1" height="1" fill="#a89a78"/>
<line x1="21" y1="550.5" x2="24" y2="550.5" stroke="#a89a78" stroke-dasharray="1 1" stroke-dashoffset="0"/>
<line x1="1018" y1="550.5" x2="1021" y2="550.5" stroke="#a89a78" stroke-dasharray="1 1" stroke-dashoffset="0"/>
<rect x="520" y="550" width="3" height="1" fill="#a89a78"/>
<rect x="518" y="550" width="1" height="1" fill="#a89a78"/>
<rect x="524" y="550" width="1" height="1" fill="#a89a78"/>
<line x1="21" y1="563.5" x2="24" y2="563.5" stroke="#a89a78" stroke-dasharray="1 1" stroke-dashoffset="0"/>
<line x1="1018" y1="563.5" x2="1021" y2="563.5" stroke="#a89a78" stroke-dasharray="1 1" stroke-dashoffset="0"/>
<rect x="520" y="563" width="3" height="1" fill="#a89a78"/>
<rect x="518" y="563" width="1" height="1" fill="#a89a78"/>
<rect x="524" y="563" width="1" height="1" fill="#a89a78"/>
<line x1="21" y1="576.5" x2="24" y2="576.5" stroke="#a89a78" stroke-dasharray="1 1" stroke-dashoffset="0"/>
<line x1="1018" y1="576.5" x2="1021" y2="576.5" stroke="#a89a78" stroke-dasharray="1 1" stroke-dashoffset="0"/>
<rect x="520" y="576" width="3" height="1" fill="#a89a78"/>
<rect x="518" y="576" width="1" height="1" fill="#a89a78"/>
<rect x="524" y="576" width="1" height="1" fill="#a89a78"/>
<line x1="21" y1="589.5" x2="24" y2="589.5" stroke="#a89a78" stroke-dasharray="1 1" stroke-dashoffset="0"/>
<line x1="1018" y1="589.5" x2="1021" y2="589.5" stroke="#a89a78" stroke-dasharray="1 1" stroke-dashoffset="0"/>
<rect x="520" y="589" width="3" height="1" fill="#a89a78"/>
<rect x="518" y="589" width="1" height="1" fill="#a89a78"/>
<rect x="524" y="589" width="1" height="1" fill="#a89a78"/>
<line x1="21" y1="615.5" x2="24" y2="615.5" stroke="#a89a78" stroke-dasharray="1 1" stroke-dashoffset="0"/>
<line x1="1018" y1="615.5" x2="1021" y2="615.5" stroke="#a89a78" stroke-dasharray="1 1" stroke-dashoffset="0"/>
<rect x="520" y="615" width="3" height="1" fill="#a89a78"/>
<rect x="518" y="615" width="1" height="1" fill="#a89a78"/>
<rect x="524" y="615" width="1" height="1" fill="#a89a78"/>
<line x1="21" y1="628.5" x2="24" y2="628.5" stroke="#a89a78" stroke-dasharray="1 1" stroke-dashoffset="0"/>
<line x1="1018" y1="628.5" x2="1021" y2="628.5" stroke="#a89a78" stroke-dasharray="1 1" stroke-dashoffset="0"/>
<rect x="520" y="628" width="3" height="1" fill="#a89a78"/>
<rect x="518" y="628" width="1" height="1" fill="#a89a78"/>
<rect x="524" y="628" width="1" height="1" fill="#a89a78"/>
<line x1="21" y1="641.5" x2="24" y2="641.5" stroke="#a89a78" stroke-dasharray="1 1" stroke-dashoffset="0"/>
<line x1="1018" y1="641.5" x2="1021" y2="641.5" stroke="#a89a78" stroke-dasharray="1 1" stroke-dashoffset="0"/>
<rect x="520" y="641" width="3" height="1" fill="#a89a78"/>
<rect x="518" y="641" width="1" height="1" fill="#a89a78"/>
<rect x="524" y="641" width="1" height="1" fill="#a89a78"/>
<line x1="21" y1="654.5" x2="24" y2="654.5" stroke="#a89a78" stroke-dasharray="1 1" stroke-dashoffset="0"/>
<line x1="1018" y1="654.5" x2="1021" y2="654.5" stroke="#a89a78" stroke-dasharray="1 1" stroke-dashoffset="0"/>
<rect x="520" y="654" width="3" height="1" fill="#a89a78"/>
<rect x="518" y="654" width="1" height="1" fill="#a89a78"/>
<rect x="524" y="654" width="1" height="1" fill="#a89a78"/>
</g>
<!-- cursors -->
<g shape-rendering="crispEdges">
<rect x="21" y="98" width="1000" height="1" fill="#ffff00"/>
<rect x="21" y="239" width="1000" height="1" fill="#ffff00"/>
</g>
<line x1="516.5" y1="19" x2="516.5" y2="668" stroke="#ffff00" stroke-width="1" stroke-dasharray="4 4" shape-rendering="crispEdges"/><line x1="536.5" y1="19" x2="536.5" y2="668" stroke="#ffff00" stroke-width="1" stroke-dasharray="4 4" shape-rendering="crispEdges"/>
<rect x="509.5" y="91.5" width="14" height="14" fill="none" stroke="#ffff00" stroke-width="1" shape-rendering="crispEdges"/>
<circle cx="536.5" cy="239.5" r="7" fill="none" stroke="#ffff00" stroke-width="1.2"/>
<clipPath id="gc"><rect x="21" y="17" width="1000" height="651"/></clipPath>
<g clip-path="url(#gc)">
<!-- ch1 -->
<path d="M20.0 111.2C23.3 111.5 21.7 111.1 30.0 112.0C38.3 112.9 36.7 113.4 45.0 114.0C53.3 114.6 48.3 115.2 55.0 113.7C61.7 112.2 59.2 110.4 65.0 109.5C70.8 108.6 65.0 111.3 72.5 111.0C80.0 110.7 79.2 108.5 87.5 108.5C95.8 108.5 90.8 110.1 97.5 111.0C104.2 111.9 100.0 110.7 107.5 111.2C115.0 111.7 113.3 112.9 120.0 112.5C126.7 112.1 122.5 110.7 127.5 110.0C132.5 109.3 129.2 111.1 135.0 110.5C140.8 109.9 138.3 108.2 145.0 108.2C151.7 108.2 148.3 109.2 155.0 110.5C161.7 111.8 158.3 110.9 165.0 112.0C171.7 113.1 168.7 113.1 175.0 113.7C181.3 114.3 179.0 114.8 184.0 113.7C189.0 112.6 184.7 111.7 190.0 110.5C195.3 109.3 194.2 109.7 200.0 110.0C205.8 110.3 200.5 110.0 207.5 111.5C214.5 113.0 212.7 115.2 221.0 114.5C229.3 113.8 224.5 111.8 232.5 109.5C240.5 107.2 237.8 108.7 245.0 107.5C252.2 106.3 249.0 105.7 254.0 106.0C259.0 106.3 254.7 106.4 260.0 108.5C265.3 110.6 262.5 111.1 270.0 112.3C277.5 113.5 274.2 113.4 282.5 112.0C290.8 110.6 285.8 109.0 295.0 108.2C304.2 107.4 300.8 107.9 310.0 109.5C319.2 111.1 315.8 112.4 322.5 113.0C329.2 113.6 322.5 110.9 330.0 111.2C337.5 111.5 337.5 112.9 345.0 114.0C352.5 115.1 345.8 115.0 352.5 114.5C359.2 114.0 357.5 114.7 365.0 112.5C372.5 110.3 368.3 109.3 375.0 108.0C381.7 106.7 378.3 107.4 385.0 108.5C391.7 109.6 388.3 110.9 395.0 111.2C401.7 111.5 398.5 110.9 405.0 109.5C411.5 108.1 408.7 106.8 414.5 107.0C420.3 107.2 417.3 108.3 422.5 110.0C427.7 111.7 424.2 111.8 430.0 112.0C435.8 112.2 434.3 110.7 440.0 110.5C445.7 110.3 442.4 111.4 447.0 111.5C451.6 111.6 450.4 110.0 453.7 110.8C457.0 111.6 454.9 111.3 457.0 114.0C459.1 116.7 457.8 115.8 460.0 119.0C462.2 122.2 461.5 121.7 463.5 123.5C465.5 125.3 463.8 124.4 466.0 124.5C468.2 124.6 466.3 124.0 470.0 123.7C473.7 123.4 473.2 123.1 477.0 123.5C480.8 123.9 478.8 123.9 481.5 125.0C484.2 126.1 482.7 126.7 485.0 126.7C487.3 126.7 486.2 126.9 488.5 125.0C490.8 123.1 489.5 123.2 492.0 121.0C494.5 118.8 492.7 120.2 496.0 118.5C499.3 116.8 498.2 117.5 502.0 116.0C505.8 114.5 503.8 115.7 507.5 114.0C511.2 112.3 509.8 112.7 513.0 111.0C516.2 109.3 514.3 109.4 517.0 109.0C519.7 108.6 518.0 109.0 521.0 109.8C524.0 110.6 523.0 110.4 526.0 111.5C529.0 112.6 523.7 112.5 530.0 113.0C536.3 113.5 537.1 113.8 545.0 113.0C552.9 112.2 548.4 111.0 553.7 110.7C559.0 110.4 554.7 112.7 561.0 112.0C567.3 111.3 565.3 109.2 572.5 108.7C579.7 108.2 574.2 108.8 582.5 110.5C590.8 112.2 589.2 111.2 597.5 113.7C605.8 116.2 600.0 117.4 607.5 118.0C615.0 118.6 613.3 115.7 620.0 115.5C626.7 115.3 621.7 118.7 627.5 117.5C633.3 116.3 630.8 114.7 637.5 112.0C644.2 109.3 640.4 110.3 647.5 109.5C654.6 108.7 651.6 110.8 658.7 109.5C665.8 108.2 661.6 105.3 668.7 105.5C675.8 105.7 672.1 109.0 680.0 110.0C687.9 111.0 684.2 107.5 692.5 108.5C700.8 109.5 696.7 111.0 705.0 113.0C713.3 115.0 710.8 114.5 717.5 114.5C724.2 114.5 717.9 112.8 725.0 113.0C732.1 113.2 730.8 116.2 738.7 115.0C746.6 113.8 741.6 111.3 748.7 109.5C755.8 107.7 753.6 109.3 760.0 109.5C766.4 109.7 762.8 109.2 768.0 110.0C773.2 110.8 768.8 112.0 775.5 112.0C782.2 112.0 780.2 111.1 788.0 110.0C795.8 108.9 792.3 108.4 799.0 108.7C805.7 109.0 800.4 110.6 808.0 111.0C815.6 111.4 814.2 109.1 821.7 110.0C829.2 110.9 823.4 111.9 830.5 113.7C837.6 115.5 835.5 115.7 843.0 115.5C850.5 115.3 846.3 114.2 853.0 113.0C859.7 111.8 858.0 113.0 863.0 112.0C868.0 111.0 864.3 110.0 868.0 110.0C871.7 110.0 869.4 112.2 874.0 112.0C878.6 111.8 876.2 110.3 881.7 109.5C887.2 108.7 885.1 108.0 890.5 109.5C895.9 111.0 893.0 112.8 898.0 114.0C903.0 115.2 900.5 114.8 905.5 113.0C910.5 111.2 908.0 109.3 913.0 108.7C918.0 108.1 915.5 110.1 920.5 111.2C925.5 112.3 921.3 110.7 928.0 112.0C934.7 113.3 933.8 114.3 940.5 115.0C947.2 115.7 942.2 115.7 948.0 114.0C953.8 112.3 952.2 111.3 958.0 110.0C963.8 108.7 959.7 109.0 965.5 110.0C971.3 111.0 969.3 111.3 975.5 113.0C981.7 114.7 977.3 115.3 984.0 115.0C990.7 114.7 988.3 113.0 995.5 112.0C1002.7 111.0 999.3 112.8 1005.5 112.0C1011.7 111.2 1008.8 109.8 1014.0 109.5C1019.2 109.2 1018.7 110.6 1021.0 111.2" fill="none" stroke="#b4b000" stroke-width="4" stroke-opacity="0.3" stroke-linejoin="round"/>
<path d="M20.0 111.2C23.3 111.5 21.7 111.1 30.0 112.0C38.3 112.9 36.7 113.4 45.0 114.0C53.3 114.6 48.3 115.2 55.0 113.7C61.7 112.2 59.2 110.4 65.0 109.5C70.8 108.6 65.0 111.3 72.5 111.0C80.0 110.7 79.2 108.5 87.5 108.5C95.8 108.5 90.8 110.1 97.5 111.0C104.2 111.9 100.0 110.7 107.5 111.2C115.0 111.7 113.3 112.9 120.0 112.5C126.7 112.1 122.5 110.7 127.5 110.0C132.5 109.3 129.2 111.1 135.0 110.5C140.8 109.9 138.3 108.2 145.0 108.2C151.7 108.2 148.3 109.2 155.0 110.5C161.7 111.8 158.3 110.9 165.0 112.0C171.7 113.1 168.7 113.1 175.0 113.7C181.3 114.3 179.0 114.8 184.0 113.7C189.0 112.6 184.7 111.7 190.0 110.5C195.3 109.3 194.2 109.7 200.0 110.0C205.8 110.3 200.5 110.0 207.5 111.5C214.5 113.0 212.7 115.2 221.0 114.5C229.3 113.8 224.5 111.8 232.5 109.5C240.5 107.2 237.8 108.7 245.0 107.5C252.2 106.3 249.0 105.7 254.0 106.0C259.0 106.3 254.7 106.4 260.0 108.5C265.3 110.6 262.5 111.1 270.0 112.3C277.5 113.5 274.2 113.4 282.5 112.0C290.8 110.6 285.8 109.0 295.0 108.2C304.2 107.4 300.8 107.9 310.0 109.5C319.2 111.1 315.8 112.4 322.5 113.0C329.2 113.6 322.5 110.9 330.0 111.2C337.5 111.5 337.5 112.9 345.0 114.0C352.5 115.1 345.8 115.0 352.5 114.5C359.2 114.0 357.5 114.7 365.0 112.5C372.5 110.3 368.3 109.3 375.0 108.0C381.7 106.7 378.3 107.4 385.0 108.5C391.7 109.6 388.3 110.9 395.0 111.2C401.7 111.5 398.5 110.9 405.0 109.5C411.5 108.1 408.7 106.8 414.5 107.0C420.3 107.2 417.3 108.3 422.5 110.0C427.7 111.7 424.2 111.8 430.0 112.0C435.8 112.2 434.3 110.7 440.0 110.5C445.7 110.3 442.4 111.4 447.0 111.5C451.6 111.6 450.4 110.0 453.7 110.8C457.0 111.6 454.9 111.3 457.0 114.0C459.1 116.7 457.8 115.8 460.0 119.0C462.2 122.2 461.5 121.7 463.5 123.5C465.5 125.3 463.8 124.4 466.0 124.5C468.2 124.6 466.3 124.0 470.0 123.7C473.7 123.4 473.2 123.1 477.0 123.5C480.8 123.9 478.8 123.9 481.5 125.0C484.2 126.1 482.7 126.7 485.0 126.7C487.3 126.7 486.2 126.9 488.5 125.0C490.8 123.1 489.5 123.2 492.0 121.0C494.5 118.8 492.7 120.2 496.0 118.5C499.3 116.8 498.2 117.5 502.0 116.0C505.8 114.5 503.8 115.7 507.5 114.0C511.2 112.3 509.8 112.7 513.0 111.0C516.2 109.3 514.3 109.4 517.0 109.0C519.7 108.6 518.0 109.0 521.0 109.8C524.0 110.6 523.0 110.4 526.0 111.5C529.0 112.6 523.7 112.5 530.0 113.0C536.3 113.5 537.1 113.8 545.0 113.0C552.9 112.2 548.4 111.0 553.7 110.7C559.0 110.4 554.7 112.7 561.0 112.0C567.3 111.3 565.3 109.2 572.5 108.7C579.7 108.2 574.2 108.8 582.5 110.5C590.8 112.2 589.2 111.2 597.5 113.7C605.8 116.2 600.0 117.4 607.5 118.0C615.0 118.6 613.3 115.7 620.0 115.5C626.7 115.3 621.7 118.7 627.5 117.5C633.3 116.3 630.8 114.7 637.5 112.0C644.2 109.3 640.4 110.3 647.5 109.5C654.6 108.7 651.6 110.8 658.7 109.5C665.8 108.2 661.6 105.3 668.7 105.5C675.8 105.7 672.1 109.0 680.0 110.0C687.9 111.0 684.2 107.5 692.5 108.5C700.8 109.5 696.7 111.0 705.0 113.0C713.3 115.0 710.8 114.5 717.5 114.5C724.2 114.5 717.9 112.8 725.0 113.0C732.1 113.2 730.8 116.2 738.7 115.0C746.6 113.8 741.6 111.3 748.7 109.5C755.8 107.7 753.6 109.3 760.0 109.5C766.4 109.7 762.8 109.2 768.0 110.0C773.2 110.8 768.8 112.0 775.5 112.0C782.2 112.0 780.2 111.1 788.0 110.0C795.8 108.9 792.3 108.4 799.0 108.7C805.7 109.0 800.4 110.6 808.0 111.0C815.6 111.4 814.2 109.1 821.7 110.0C829.2 110.9 823.4 111.9 830.5 113.7C837.6 115.5 835.5 115.7 843.0 115.5C850.5 115.3 846.3 114.2 853.0 113.0C859.7 111.8 858.0 113.0 863.0 112.0C868.0 111.0 864.3 110.0 868.0 110.0C871.7 110.0 869.4 112.2 874.0 112.0C878.6 111.8 876.2 110.3 881.7 109.5C887.2 108.7 885.1 108.0 890.5 109.5C895.9 111.0 893.0 112.8 898.0 114.0C903.0 115.2 900.5 114.8 905.5 113.0C910.5 111.2 908.0 109.3 913.0 108.7C918.0 108.1 915.5 110.1 920.5 111.2C925.5 112.3 921.3 110.7 928.0 112.0C934.7 113.3 933.8 114.3 940.5 115.0C947.2 115.7 942.2 115.7 948.0 114.0C953.8 112.3 952.2 111.3 958.0 110.0C963.8 108.7 959.7 109.0 965.5 110.0C971.3 111.0 969.3 111.3 975.5 113.0C981.7 114.7 977.3 115.3 984.0 115.0C990.7 114.7 988.3 113.0 995.5 112.0C1002.7 111.0 999.3 112.8 1005.5 112.0C1011.7 111.2 1008.8 109.8 1014.0 109.5C1019.2 109.2 1018.7 110.6 1021.0 111.2" fill="none" stroke="#e8e600" stroke-width="1.8" stroke-linejoin="round"/>
<!-- ch4 -->
<polyline points="21.0,663.3 112.4,663.3 112.8,650.0 113.3,627.0 115.0,637.5 116.0,628.0 116.5,617.0 117.5,608.0 118.5,607.0 119.5,612.0 121.0,602.0 123.0,603.0 125.5,599.2 128.0,599.3 162.3,599.0 162.7,615.0 163.5,636.0 165.0,625.0 166.0,632.0 166.5,645.0 167.5,653.0 169.5,649.5 170.5,653.0 172.0,661.0 173.5,658.5 175.0,661.0 177.0,660.0 179.0,663.2 1021.0,663.2" fill="none" stroke="#00a000" stroke-width="1.15" stroke-linejoin="round"/>
<g fill="none" stroke="#007000" stroke-width="1.5" stroke-dasharray="3 1 2 2 4 1 1 2" stroke-opacity="0.75">
<path d="M21 664.5 H112 M180 664.4 H1021 M128 600.4 H162"/></g>
<g fill="none" stroke="#00bc00" stroke-width="1.4">
<path d="M21 663.1 H112.6 M178.5 663 H1021 M125.5 598.9 H162.4"/></g>
</g>
<!-- trigger T marker -->
<path d="M108 24 H118 L119 25 V36 L114 39.6 H112 L107 36 V25 Z" fill="#ff9a00"/>
<rect x="108" y="25" width="10" height="2" fill="#000"/><rect x="112" y="27" width="2" height="9" fill="#000"/>
<!-- top bar trigger pos -->
<path d="M518 1 H526 L522 5 Z" fill="#ff9a00"/>
<path d="M516 17 H527 L521.5 22.7 Z" fill="#ff9a00"/>
<g shape-rendering="crispEdges">
<rect x="507" y="5" width="8" height="11" rx="1.5" fill="#ff9a00" shape-rendering="auto"/>
<rect x="508" y="7" width="4" height="8" fill="#000"/>
<rect x="508" y="1" width="2" height="14" fill="#968ea2"/><rect x="510" y="1" width="1" height="2" fill="#968ea2"/><rect x="510" y="13" width="1" height="2" fill="#968ea2"/>
<rect x="533" y="1" width="2" height="14" fill="#968ea2"/><rect x="532" y="1" width="1" height="2" fill="#968ea2"/><rect x="532" y="13" width="1" height="2" fill="#968ea2"/>
</g>
<!-- trigger level arrow -->
<path d="M1010 637.5 L1016 631.5 V643.5 Z" fill="#00b400"/><rect x="1016" y="637" width="5" height="1" fill="#00b400"/>
<!-- ch markers -->
<path d="M0 77 H12.5 L19.5 85 L12.5 93.5 H0 Z" fill="#ffff00"/>
<path d="M0 77.5 H12.5" stroke="#fff" stroke-width="1" opacity="0.8"/>
<path d="M0 93 H12.5 L19 85.5" stroke="#77700a" stroke-width="1" fill="none"/>
<path d="M0.5 650.5 H12.5 L19 658.5 L12.5 666.5 H0.5 Z" fill="#000" stroke="#109810" stroke-width="1.3"/>
<!-- a / b markers -->
<circle cx="34" cy="108" r="8" fill="#ff4400"/>
<circle cx="34" cy="229" r="8" fill="#ff4400"/>
</svg>
<!-- readout panel -->
<div class="panel" style="left:719px;top:40px;width:302px;height:60px;border-color:#e8e8f4;"></div>
<div class="abs" style="left:738px;top:44px;width:13px;height:13px;border:1px solid #ffff00;"></div>
<svg class="abs" style="left:736px;top:62px" width="20" height="20"><circle cx="9.5" cy="9.5" r="7" fill="none" stroke="#ffff00" stroke-width="1.25"/></svg>
<div class="pill" style="left:889px;top:44px;width:16px;height:16px;background:#ff4400;"></div>
<div class="pill" style="left:889px;top:63px;width:16px;height:16px;background:#ff4400;"></div>
<!-- bottom panels -->
<div class="panel" style="left:20px;top:670px;width:555px;height:21px;border-radius:6px;"></div>
<div class="panel" style="left:582px;top:670px;width:148px;height:38px;"></div>
<div class="panel" style="left:737px;top:670px;width:107px;height:38px;"></div>
<div class="panel" style="left:851px;top:670px;width:171px;height:38px;"></div>
<div class="panel" style="left:909px;top:729px;width:113px;height:37px;"></div>
<div class="pill" style="left:26px;top:673px;width:26px;height:16px;background:#ffff00;"></div>
<div class="pill" style="left:443px;top:673px;width:26px;height:16px;background:#10a810;"></div>
<div class="pill" style="left:882px;top:673px;width:26px;height:16px;background:#10a810;"></div>
<!-- T-> marker in timebase -->
<div class="abs" style="left:587px;top:691px;width:12px;height:13px;background:#ff9a00;border-radius:2px;"></div>
<svg class="abs" style="left:0;top:0" width="1024" height="768" viewBox="0 0 1024 768">
<rect x="589" y="693" width="8" height="2" fill="#000"/><rect x="592" y="695" width="2" height="8" fill="#000"/>
<path d="M600 697.5 H608 M605 694.5 L608 697.5 L605 700.5" stroke="#ff9a00" stroke-width="1.3" fill="none"/>
<path d="M610 694 H621 L615.5 700 Z" fill="#ff9a00"/>
<path d="M920 684.9 H924.4 L927.6 676 H932" stroke="#fff" stroke-width="1.9" fill="none"/>
</svg>
<!-- buttons -->
<div class="btn" style="left:20px;top:714px;width:114px;height:53px;"></div>
<div class="btn" style="left:138px;top:714px;width:114px;height:53px;"></div>
<div class="btn" style="left:256px;top:714px;width:114px;height:54px;border-bottom:none;border-radius:4px 4px 0 0;"></div>
<div class="btn" style="left:374px;top:714px;width:114px;height:53px;"></div>
<div class="btn" style="left:492px;top:714px;width:114px;height:53px;"></div>
<div class="btn" style="left:610px;top:714px;width:114px;height:53px;"></div>
<div class="hl" style="left:45px;top:742px;width:65px;height:16px;"></div>
<div class="hl" style="left:183px;top:750px;width:25px;height:16px;"></div>
<div class="hl" style="left:268px;top:742px;width:32px;height:26px;border-radius:5px 5px 0 0;"></div>
<div class="hl" style="left:655px;top:742px;width:25px;height:16px;"></div>
<div id="txt" style="position:absolute;left:0;top:0;width:1024px;height:768px;will-change:transform;">
<span class="t" style="left:0.00px;top:-1.75px;font:700 21.5px/21.5px 'Liberation Serif',serif;letter-spacing:-1.455px;color:#000;-webkit-text-stroke:0.7px #000;">Tek</span>
<span class="t" style="left:35.00px;top:-0.25px;font:400 15.5px/15.5px 'Liberation Sans',sans-serif;letter-spacing:1.093px;color:#fff;-webkit-text-stroke:0.4px #fff;">Run</span>
<span class="t" style="left:925.00px;top:-0.25px;font:400 15.5px/15.5px 'Liberation Sans',sans-serif;letter-spacing:1.688px;color:#fff;-webkit-text-stroke:0.4px #fff;">Trig’d</span>
<span class="t" style="left:801.00px;top:43.75px;font:400 15.5px/15.5px 'Liberation Sans',sans-serif;letter-spacing:1.380px;color:#ffff00;-webkit-text-stroke:0.4px #ffff00;">8.050µs</span>
<span class="t" style="left:801.00px;top:62.75px;font:400 15.5px/15.5px 'Liberation Sans',sans-serif;letter-spacing:1.380px;color:#ffff00;-webkit-text-stroke:0.4px #ffff00;">8.450µs</span>
<span class="t" style="left:793.00px;top:81.75px;font:400 15.5px/15.5px 'Liberation Sans',sans-serif;letter-spacing:1.748px;color:#ffff00;-webkit-text-stroke:0.4px #ffff00;">Δ400.0ns</span>
<span class="t" style="left:923.00px;top:43.75px;font:400 15.5px/15.5px 'Liberation Sans',sans-serif;letter-spacing:1.464px;color:#ffff00;-webkit-text-stroke:0.4px #ffff00;">−4.000mV</span>
<span class="t" style="left:923.00px;top:62.75px;font:400 15.5px/15.5px 'Liberation Sans',sans-serif;letter-spacing:1.464px;color:#ffff00;-webkit-text-stroke:0.4px #ffff00;">−47.60mV</span>
<span class="t" style="left:921.00px;top:81.75px;font:400 15.5px/15.5px 'Liberation Sans',sans-serif;letter-spacing:1.707px;color:#ffff00;-webkit-text-stroke:0.4px #ffff00;">Δ43.60mV</span>
<span class="t" style="left:69.00px;top:672.75px;font:400 15.5px/15.5px 'Liberation Sans',sans-serif;letter-spacing:0.984px;color:#ffff00;-webkit-text-stroke:0.4px #ffff00;">20.0mV</span>
<span class="t" style="left:486.00px;top:672.75px;font:400 15.5px/15.5px 'Liberation Sans',sans-serif;letter-spacing:0.905px;color:#00b000;-webkit-text-stroke:0.4px #00b000;">5.00 V</span>
<span class="t" style="left:589.00px;top:672.75px;font:400 15.5px/15.5px 'Liberation Sans',sans-serif;letter-spacing:1.380px;color:#fff;-webkit-text-stroke:0.4px #fff;">2.00µs</span>
<span class="t" style="left:623.00px;top:689.75px;font:400 15.5px/15.5px 'Liberation Sans',sans-serif;letter-spacing:1.380px;color:#ff9a00;-webkit-text-stroke:0.4px #ff9a00;">8.15000µs</span>
<span class="t" style="left:744.00px;top:672.75px;font:400 15.5px/15.5px 'Liberation Sans',sans-serif;letter-spacing:0.876px;color:#fff;-webkit-text-stroke:0.4px #fff;">2.50GS/s</span>
<span class="t" style="left:744.00px;top:689.75px;font:400 15.5px/15.5px 'Liberation Sans',sans-serif;letter-spacing:1.569px;color:#fff;-webkit-text-stroke:0.4px #fff;">1M points</span>
<span class="t" style="left:966.00px;top:672.75px;font:400 15.5px/15.5px 'Liberation Sans',sans-serif;letter-spacing:0.905px;color:#fff;-webkit-text-stroke:0.4px #fff;">1.60 V</span>
<span class="t" style="left:916.00px;top:732.75px;font:400 15.5px/15.5px 'Liberation Sans',sans-serif;letter-spacing:1.529px;color:#fff;-webkit-text-stroke:0.4px #fff;">24 Jun 2021</span>
<span class="t" style="left:916.00px;top:749.75px;font:400 15.5px/15.5px 'Liberation Sans',sans-serif;letter-spacing:1.469px;color:#fff;-webkit-text-stroke:0.4px #fff;">10:01:59</span>
<span class="t" style="left:55.00px;top:724.75px;font:400 15.5px/15.5px 'Liberation Sans',sans-serif;letter-spacing:1.949px;color:#000;-webkit-text-stroke:0.4px #000;">Mode</span>
<span class="t" style="left:46.00px;top:741.75px;font:400 15.5px/15.5px 'Liberation Sans',sans-serif;letter-spacing:1.028px;color:#000;-webkit-text-stroke:0.4px #000;">Average</span>
<span class="t" style="left:169.00px;top:715.75px;font:400 15.5px/15.5px 'Liberation Sans',sans-serif;letter-spacing:0.731px;color:#000;-webkit-text-stroke:0.4px #000;">Record</span>
<span class="t" style="left:168.00px;top:732.75px;font:400 15.5px/15.5px 'Liberation Sans',sans-serif;letter-spacing:1.642px;color:#000;-webkit-text-stroke:0.4px #000;">Length</span>
<span class="t" style="left:185.00px;top:749.75px;font:400 15.5px/15.5px 'Liberation Sans',sans-serif;letter-spacing:1.380px;color:#000;-webkit-text-stroke:0.4px #000;">1M</span>
<span class="t" style="left:292.00px;top:719.75px;font:400 15.5px/15.5px 'Liberation Sans',sans-serif;letter-spacing:0.781px;color:#000;-webkit-text-stroke:0.4px #000;">Delay</span>
<span class="t" style="left:273.00px;top:746.75px;font:400 15.5px/15.5px 'Liberation Sans',sans-serif;letter-spacing:0.479px;color:#000;-webkit-text-stroke:0.4px #000;transform:scaleX(1.12);transform-origin:0 0;">On</span>
<span class="t" style="left:330.00px;top:746.75px;font:400 15.5px/15.5px 'Liberation Sans',sans-serif;letter-spacing:0.822px;color:#000;-webkit-text-stroke:0.4px #000;transform:scaleX(1.1);transform-origin:0 0;">Off</span>
<span class="t" style="left:393.00px;top:715.75px;font:400 15.5px/15.5px 'Liberation Sans',sans-serif;letter-spacing:1.140px;color:#000;-webkit-text-stroke:0.4px #000;">Set Horiz.</span>
<span class="t" style="left:399.00px;top:732.75px;font:400 15.5px/15.5px 'Liberation Sans',sans-serif;letter-spacing:1.497px;color:#000;-webkit-text-stroke:0.4px #000;">Position</span>
<span class="t" style="left:410.00px;top:749.75px;font:400 15.5px/15.5px 'Liberation Sans',sans-serif;letter-spacing:1.168px;color:#000;-webkit-text-stroke:0.4px #000;">to 0 s</span>
<span class="t" style="left:510.00px;top:724.75px;font:400 15.5px/15.5px 'Liberation Sans',sans-serif;letter-spacing:1.409px;color:#000;-webkit-text-stroke:0.4px #000;">Waveform</span>
<span class="t" style="left:521.00px;top:741.75px;font:400 15.5px/15.5px 'Liberation Sans',sans-serif;letter-spacing:1.155px;color:#000;-webkit-text-stroke:0.4px #000;">Display</span>
<span class="t" style="left:626.00px;top:724.75px;font:400 15.5px/15.5px 'Liberation Sans',sans-serif;letter-spacing:0.772px;color:#000;-webkit-text-stroke:0.4px #000;">XY Display</span>
<span class="t" style="left:656.00px;top:741.75px;font:400 15.5px/15.5px 'Liberation Sans',sans-serif;letter-spacing:0.570px;color:#000;-webkit-text-stroke:0.4px #000;transform:scaleX(1.08);transform-origin:0 0;">Off</span>
<span class="t" style="left:5.00px;top:77.75px;font:700 15.5px/15.5px 'Liberation Sans',sans-serif;letter-spacing:0.010px;color:#000;">1</span>
<span class="t" style="left:4.00px;top:651.00px;font:400 15px/15px 'Liberation Sans',sans-serif;letter-spacing:0.010px;color:#10b010;-webkit-text-stroke:0.5px #10b010;">4</span>
<span class="t" style="left:30.00px;top:98.00px;font:400 18px/18px 'Liberation Sans',sans-serif;letter-spacing:0.010px;color:#000;-webkit-text-stroke:0.3px #000;">a</span>
<span class="t" style="left:29.00px;top:220.75px;font:400 16.5px/16.5px 'Liberation Sans',sans-serif;letter-spacing:0.010px;color:#000;-webkit-text-stroke:0.3px #000;">b</span>
<span class="t" style="left:893.00px;top:42.00px;font:400 18px/18px 'Liberation Sans',sans-serif;letter-spacing:0.010px;color:#000;-webkit-text-stroke:0.3px #000;">a</span>
<span class="t" style="left:892.00px;top:62.75px;font:400 16.5px/16.5px 'Liberation Sans',sans-serif;letter-spacing:0.010px;color:#000;-webkit-text-stroke:0.3px #000;">b</span>
<span class="t" style="left:35.00px;top:672.75px;font:400 15.5px/15.5px 'Liberation Sans',sans-serif;letter-spacing:0.010px;color:#000;-webkit-text-stroke:0.5px #000;">1</span>
<span class="t" style="left:451.00px;top:672.75px;font:400 15.5px/15.5px 'Liberation Sans',sans-serif;letter-spacing:0.010px;color:#000;-webkit-text-stroke:0.4px #000;">4</span>
<span class="t" style="left:890.00px;top:672.75px;font:400 15.5px/15.5px 'Liberation Sans',sans-serif;letter-spacing:0.010px;color:#000;-webkit-text-stroke:0.4px #000;">4</span>
<span class="t" style="left:144.00px;top:673.50px;font:400 10px/10px 'Liberation Sans',sans-serif;letter-spacing:0.010px;color:#ffff00;">B</span>
<span class="t" style="left:149.00px;top:678.50px;font:400 9px/9px 'Liberation Sans',sans-serif;letter-spacing:0.010px;color:#ffff00;">W</span>
<span class="t" style="left:561.00px;top:673.50px;font:400 10px/10px 'Liberation Sans',sans-serif;letter-spacing:0.010px;color:#00b000;">B</span>
<span class="t" style="left:566.00px;top:678.50px;font:400 9px/9px 'Liberation Sans',sans-serif;letter-spacing:0.010px;color:#00b000;">W</span>
</div>
</body></html>
